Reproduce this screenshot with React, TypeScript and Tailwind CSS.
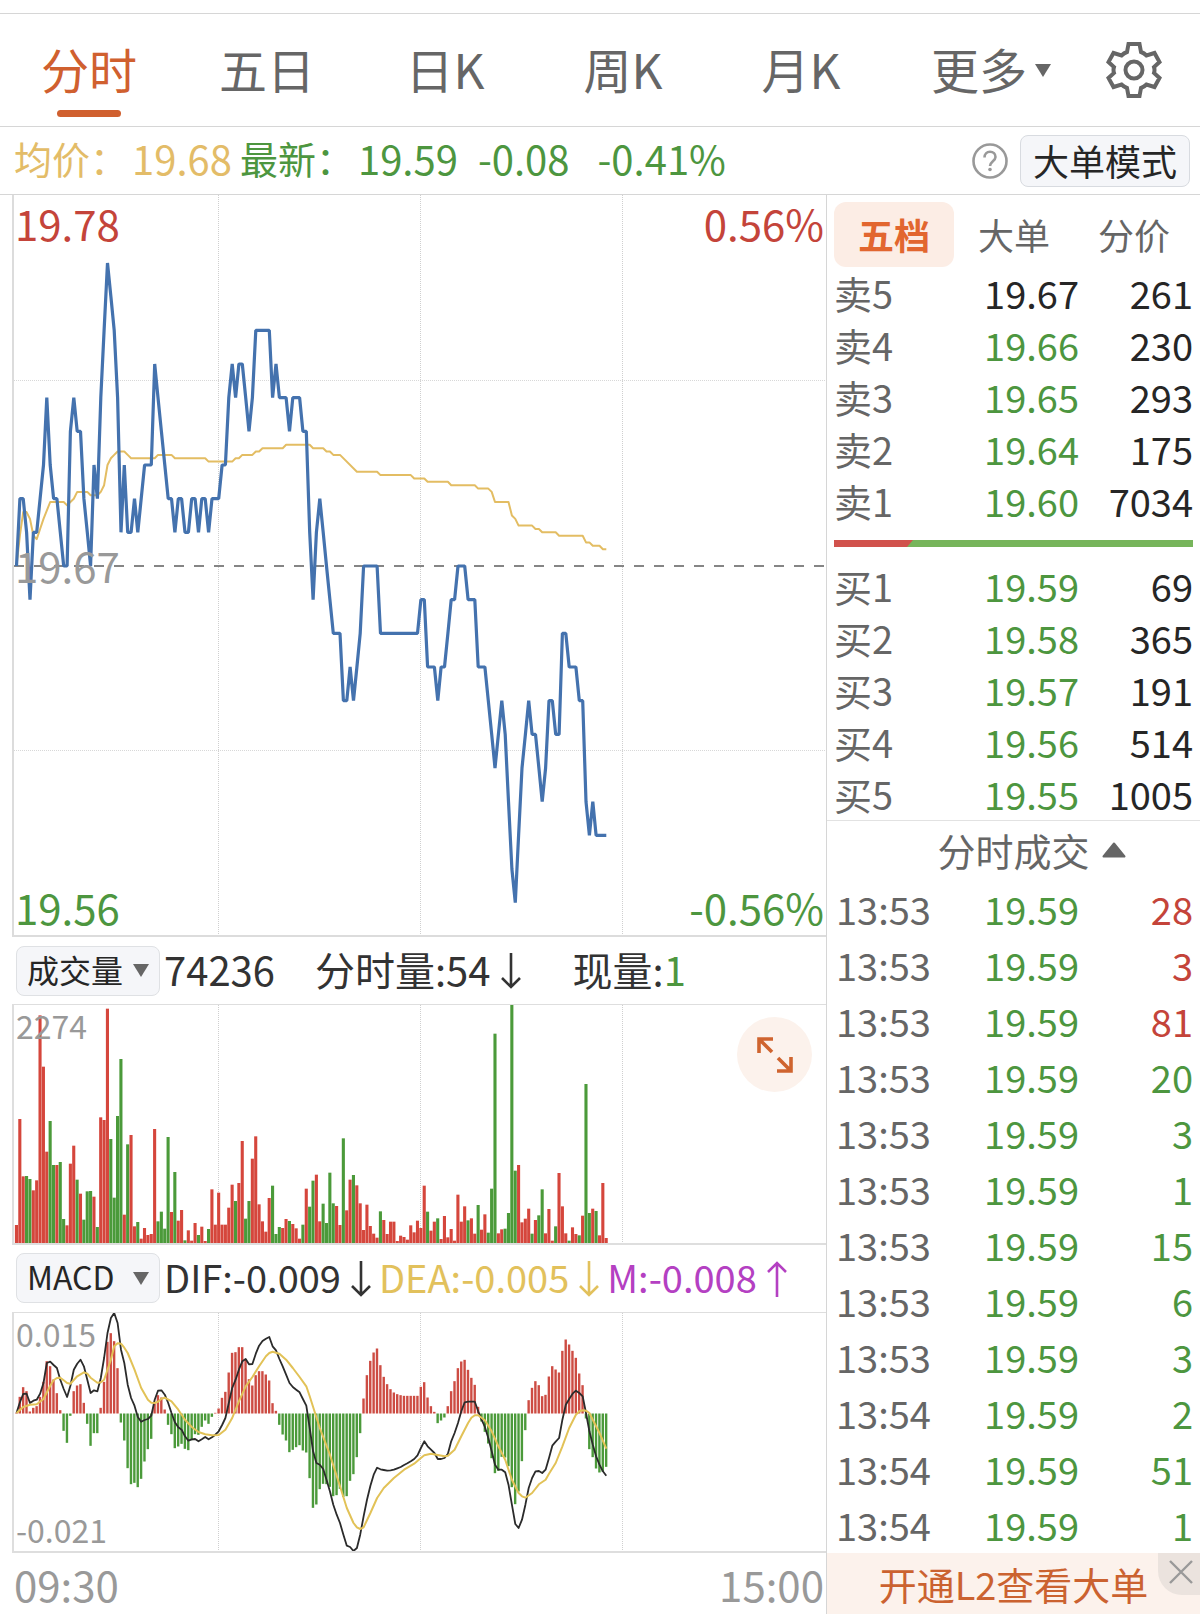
import { useState } from "react";
import clsx from "clsx";

interface Quote {
  label: string;
  price: string;
  volume: number;
  tone?: string;
}

interface Trade {
  time: string;
  volume: number;
  side: "buy" | "sell";
}

const RED = "#d5463c";
const GREEN = "#4b9a3a";
const STEP = 3.37;
const START = 2.5;

const periods = ["分时", "五日", "日K", "周K", "月K"];

const asks: Quote[] = [
  { label: "卖5", price: "19.67", volume: 261, tone: "text-[#262626]" },
  { label: "卖4", price: "19.66", volume: 230 },
  { label: "卖3", price: "19.65", volume: 293 },
  { label: "卖2", price: "19.64", volume: 175 },
  { label: "卖1", price: "19.60", volume: 7034 },
];

const bids: Quote[] = [
  { label: "买1", price: "19.59", volume: 69 },
  { label: "买2", price: "19.58", volume: 365 },
  { label: "买3", price: "19.57", volume: 191 },
  { label: "买4", price: "19.56", volume: 514 },
  { label: "买5", price: "19.55", volume: 1005 },
];

const trades: Trade[] = [
  { time: "13:53", volume: 28, side: "buy" },
  { time: "13:53", volume: 3, side: "buy" },
  { time: "13:53", volume: 81, side: "buy" },
  { time: "13:53", volume: 20, side: "sell" },
  { time: "13:53", volume: 3, side: "sell" },
  { time: "13:53", volume: 1, side: "sell" },
  { time: "13:53", volume: 15, side: "sell" },
  { time: "13:53", volume: 6, side: "sell" },
  { time: "13:53", volume: 3, side: "sell" },
  { time: "13:54", volume: 2, side: "sell" },
  { time: "13:54", volume: 51, side: "sell" },
  { time: "13:54", volume: 1, side: "sell" },
];

// Price per minute, in cents above or below the previous close
const price = [
  0, 2, 2, 1, -1, 1, 1, 2, 3, 5, 3, 2, 2, 1, 0, 0, 4, 5, 4, 4,
  2, 1, 0, 3, 2, 5, 7, 9, 8, 7, 5, 1, 3, 1, 1, 2, 1, 2, 3, 3,
  3, 6, 5, 4, 3, 2, 2, 1, 2, 2, 1, 1, 2, 2, 1, 2, 2, 1, 2, 2,
  2, 3, 3, 5, 6, 5, 6, 6, 5, 4, 5, 7, 7, 7, 7, 7, 5, 6, 5, 5,
  5, 4, 5, 5, 5, 4, 4, 1, -1, 1, 2, 1, 0, -1, -2, -2, -2, -4, -4, -3,
  -4, -3, -2, 0, 0, 0, 0, 0, -2, -2, -2, -2, -2, -2, -2, -2, -2, -2, -2, -2,
  -1, -1, -3, -3, -3, -4, -3, -3, -2, -1, -1, 0, 0, 0, -1, -1, -1, -3, -3, -3,
  -4, -5, -6, -5, -4, -5, -7, -9, -10, -8, -6, -5, -4, -5, -5, -6, -7, -6, -4, -4,
  -5, -5, -2, -2, -3, -3, -3, -4, -4, -7, -8, -7, -8, -8, -8, -8,
];

// Average price as [minute, tenths of a cent]
const average: number[][] = [
  [0, 0], [1, 9], [2, 16], [3, 16], [4, 14], [5, 9], [6, 8], [7, 11], [8, 14], [10, 19],
  [14, 19], [15, 18], [16, 19], [17, 20], [18, 22], [21, 22], [22, 21], [24, 21], [25, 22], [26, 24],
  [27, 30], [28, 32], [29, 33], [30, 34], [32, 34], [33, 33], [34, 32], [41, 32], [42, 33], [46, 33],
  [47, 32], [56, 32], [57, 31], [64, 31], [65, 32], [66, 32], [67, 33], [70, 33], [71, 34], [72, 34],
  [73, 35], [79, 35], [80, 36], [87, 36], [88, 35], [91, 35], [92, 34], [93, 34], [94, 33], [96, 33],
  [101, 28], [107, 28], [108, 27], [117, 27], [118, 26], [121, 26], [122, 25], [128, 25], [129, 24], [136, 24],
  [137, 23], [140, 23], [141, 22], [142, 19], [146, 19], [147, 15], [148, 14], [149, 12], [153, 12], [154, 11],
  [155, 11], [156, 10], [160, 10], [161, 9], [168, 9], [169, 7], [170, 7], [171, 6], [173, 6], [174, 5], [175, 5],
];

// Volume bars, negative for a falling minute
const volumes = [
  54, 372, 200, -201, -192, 158, 188, 683, 529, 274, -366, -234, 234, -243, -72, 53, 238, 292, -190, 148,
  -70, -155, -156, 139, -48, 377, 369, 703, -312, -136, -381, -552, 85, -296, 324, 50, -63, 13, 45, 24,
  27, 342, -65, -94, -43, -318, 93, -213, 67, 99, -8, 38, 7, 60, -24, 49, 6, -42, 161, 55,
  151, 55, 55, 106, 175, -126, 180, 306, -73, -126, 253, 320, 116, 65, 34, 135, -172, -27, -48, 45,
  72, -66, 57, 44, 13, -55, 163, -109, -187, 205, 65, -118, -60, -211, -119, 111, 54, -314, 98, 190,
  -204, 173, 119, 39, 115, 51, 28, 16, -95, 69, 27, 64, 64, 6, 22, 18, 10, 53, 32, 67,
  45, 172, -94, 37, 64, -74, 12, 81, 17, 42, 7, 145, 64, 110, -68, 74, 28, -114, 40, 86,
  -31, -163, -628, 29, 41, -43, -90, -715, -217, 234, 62, 73, 103, -28, 69, -83, -161, 29, 102, 7,
  -50, 210, 110, 29, -7, 47, 27, -23, 82, -477, -90, 103, -96, 23, 180, 15,
];

const histogram = [
  2, 50, 79, 67, 6, 17, 22, 50, 95, 157, 142, 102, 61, 10, -52, -88, -7, 67, 84, 88,
  32, -31, -97, -59, -59, 17, 95, 215, 241, 217, 136, -27, -81, -164, -212, -208, -221, -196, -144, -107,
  -76, 30, 55, 48, 12, -34, -62, -104, -99, -91, -106, -110, -80, -62, -64, -40, -21, -31, -10, 2,
  15, 47, 65, 123, 182, 184, 199, 199, 163, 103, 84, 115, 127, 127, 117, 99, 31, 8, -34, -63,
  -81, -116, -109, -101, -95, -111, -117, -194, -283, -273, -227, -211, -212, -220, -248, -245, -226, -250, -248, -202,
  -182, -131, -59, 45, 115, 158, 183, 195, 145, 110, 88, 73, 63, 58, 55, 53, 53, 53, 53, 53,
  80, 94, 48, 22, 5, -29, -21, -12, 22, 67, 97, 136, 156, 161, 131, 107, 86, 20, -24, -55,
  -90, -134, -179, -172, -130, -132, -158, -221, -272, -234, -143, -50, 40, 77, 97, 85, 52, 56, 111, 142,
  132, 123, 188, 222, 207, 188, 167, 120, 85, -15, -107, -131, -165, -177, -175, -160,
];

const dif = [
  0, 32, 57, 58, 30, 37, 40, 58, 90, 150, 154, 144, 135, 100, 72, 48, 82, 130, 148, 160,
  140, 100, 60, 68, 65, 105, 165, 240, 285, 300, 270, 190, 150, 85, 45, 22, -12, -26, -21, -18,
  -8, 40, 67, 68, 55, 30, 0, -28, -43, -50, -70, -83, -79, -78, -85, -79, -72, -79, -73, -65,
  -55, -36, -15, 30, 75, 100, 130, 155, 162, 146, 147, 178, 202, 216, 223, 228, 200, 188, 162, 140,
  115, 90, 78, 70, 62, 42, 22, -45, -115, -150, -155, -168, -200, -235, -275, -305, -330, -365, -398, -402,
  -414, -405, -365, -310, -260, -218, -185, -164, -169, -171, -173, -172, -170, -166, -162, -156, -151, -145, -138, -127,
  -105, -85, -100, -110, -120, -138, -138, -135, -122, -85, -60, -30, 5, 32, 34, 34, 34, 5, -20, -42,
  -75, -115, -155, -170, -170, -178, -215, -275, -333, -345, -320, -275, -225, -195, -175, -174, -180, -170, -135, -98,
  -86, -75, -20, 25, 42, 58, 67, 60, 50, 0, -55, -95, -130, -155, -175, -188,
];

const dea: number[][] = [
  [0, 0], [2, 18], [4, 25], [6, 26], [8, 42], [10, 82], [11, 98], [12, 105], [13, 106], [14, 98],
  [15, 90], [16, 88], [18, 110], [20, 122], [21, 118], [22, 106], [24, 91], [25, 92], [26, 100], [28, 160],
  [29, 200], [30, 209], [31, 208], [32, 196], [33, 180], [35, 130], [37, 75], [39, 40], [40, 31], [41, 30],
  [42, 34], [43, 43], [44, 46], [46, 35], [48, 10], [50, -20], [52, -42], [54, -57], [56, -64], [58, -67],
  [60, -66], [62, -50], [64, -15], [66, 35], [68, 80], [70, 108], [72, 140], [74, 170], [75, 180], [76, 184],
  [78, 178], [80, 160], [82, 135], [84, 108], [86, 80], [87, 50], [90, -45], [93, -125], [96, -220], [98, -285],
  [100, -330], [101, -343], [102, -348], [103, -343], [105, -300], [107, -255], [109, -225], [112, -195], [115, -170], [118, -152],
  [120, -135], [121, -127], [123, -122], [125, -126], [127, -130], [128, -128], [130, -110], [132, -70], [134, -30], [135, -14],
  [136, -7], [137, -7], [139, -22], [141, -55], [143, -100], [145, -140], [147, -200], [149, -240], [150, -250], [151, -254],
  [153, -240], [155, -214], [157, -200], [158, -182], [160, -150], [162, -100], [164, -45], [166, -5], [167, 5], [168, 8],
  [169, 7], [170, 0], [171, -20], [173, -60], [175, -107],
];

const xAt = (minute: number) => START + minute * STEP;

function toPoints(pairs: number[][], zero: number, scale: number) {
  return pairs.map(([i, v]) => `${xAt(i).toFixed(1)},${(zero - v * scale).toFixed(1)}`).join(" ");
}

function GridLines({ height }: { height: number }) {
  return (
    <g stroke="#cfcfcf" strokeWidth="1" strokeDasharray="1 1">
      {[204.5, 406.5, 608.5].map((x) => (
        <line key={x} x1={x} x2={x} y1="0" y2={height} />
      ))}
    </g>
  );
}

function PriceChart() {
  return (
    <div className="relative border-l-2 border-b-2 border-[#dcdcdc] text-[42px] leading-[48px]">
      <svg viewBox="0 0 812 740" preserveAspectRatio="none" className="block h-[740px] w-full" aria-hidden="true">
        <GridLines height={740} />
        <g stroke="#d8d8d8" strokeDasharray="1 1">
          <line x1="0" x2="812" y1="185.5" y2="185.5" />
          <line x1="0" x2="812" y1="555.5" y2="555.5" />
        </g>
        <line x1="0" x2="812" y1="371" y2="371" stroke="#858585" strokeWidth="2" strokeDasharray="10 10" />
        <polyline points={toPoints(average, 371, 3.367)} fill="none" stroke="#e3bd63" strokeWidth="2" strokeLinejoin="round" />
        <polyline
          points={toPoints(price.map((v, i) => [i, v]), 371, 33.67)}
          fill="none"
          stroke="#4472ae"
          strokeWidth="3.2"
          strokeLinejoin="bevel"
        />
      </svg>
      <span className="absolute left-px top-1 text-[#c4443a]">19.78</span>
      <span className="absolute right-0.5 top-1 text-[#c4443a]">0.56%</span>
      <span className="absolute left-px top-[346px] text-[#999999]">19.67</span>
      <span className="absolute bottom-1 left-px text-[#4d963f]">19.56</span>
      <span className="absolute bottom-1 right-0.5 text-[#4d963f]">-0.56%</span>
    </div>
  );
}

function VolumeChart() {
  return (
    <div className="relative border-l-2 border-b-2 border-t border-[#dedede]">
      <svg viewBox="0 0 812 238" preserveAspectRatio="none" className="block h-[238px] w-full" aria-hidden="true">
        <GridLines height={238} />
        {volumes.map((v, i) => (
          <rect
            key={i}
            x={xAt(i) - 1.6}
            y={238 - Math.abs(v) / 3}
            width="3.1"
            height={Math.abs(v) / 3}
            fill={v > 0 ? RED : GREEN}
          />
        ))}
      </svg>
      <span className="absolute left-0.5 top-0.5 text-[32px] leading-9 text-[#999999]">2274</span>
      <button
        type="button"
        aria-label="全屏"
        className="absolute right-3.5 top-3 flex size-[75px] items-center justify-center rounded-full bg-[#fcf2ec]"
      >
        <svg viewBox="0 0 36 36" className="size-9" fill="none" stroke="#cf642f" strokeWidth="3.6" aria-hidden="true">
          <path d="M16 2H2v14M2 2l13 13M20 34h14V20M34 34 21 21" />
        </svg>
      </button>
    </div>
  );
}

function MacdChart() {
  return (
    <div className="relative border-l-2 border-b-2 border-t border-[#dedede] text-[32px] leading-9 text-[#999999]">
      <svg viewBox="0 0 812 238" preserveAspectRatio="none" className="block h-[238px] w-full" aria-hidden="true">
        <GridLines height={238} />
        {histogram.map((v, i) => (
          <rect
            key={i}
            x={xAt(i) - 1.3}
            y={v > 0 ? 100.5 - v / 3 : 100.5}
            width="2.4"
            height={Math.abs(v) / 3}
            fill={v > 0 ? "#cd4c43" : GREEN}
          />
        ))}
        <polyline
          points={toPoints(dif.map((v, i) => [i, v]), 100, 0.3333)}
          fill="none"
          stroke="#2b2b2b"
          strokeWidth="1.8"
          strokeLinejoin="round"
        />
        <polyline points={toPoints(dea, 100, 0.3333)} fill="none" stroke="#e2c257" strokeWidth="2" strokeLinejoin="round" />
      </svg>
      <span className="absolute left-0.5 top-0.5">0.015</span>
      <span className="absolute bottom-1 left-0.5">-0.021</span>
    </div>
  );
}

function IndicatorSelect({ name, options }: { name: string; options: string[] }) {
  return (
    <div className="relative mb-1 mr-1 h-[50px] w-[144px] shrink-0">
      <select
        aria-label={name}
        className="size-full appearance-none rounded-lg border border-[#dfe1e4] bg-[#f5f6f9] pb-1 pl-[10px] text-[32px] leading-[44px] text-[#262626]"
      >
        {options.map((option) => (
          <option key={option}>{option}</option>
        ))}
      </select>
      <svg viewBox="0 0 16 13" className="pointer-events-none absolute right-[11px] top-[22px] h-[13px] w-4" aria-hidden="true">
        <path d="M0 0h16l-8 13z" fill="#666666" />
      </svg>
    </div>
  );
}

function Arrow({ up = false }: { up?: boolean }) {
  return (
    <svg
      viewBox="0 0 20 36"
      className="ml-2.5 mr-2 mt-1 h-9 w-5 shrink-0"
      fill="none"
      stroke="currentColor"
      strokeWidth="2.6"
      aria-hidden="true"
    >
      <path d={up ? "M10 36V2M1 11l9-9 9 9" : "M10 0v34M1 25l9 9 9-9"} />
    </svg>
  );
}

function QuoteTable({ name, quotes }: { name: string; quotes: Quote[] }) {
  return (
    <table aria-label={name} className="w-full table-fixed text-[38px] leading-[52px]">
      <tbody>
        {quotes.map((q) => (
          <tr key={q.label} className="h-[52px]">
            <th scope="row" className="w-[106px] p-0 text-left font-normal text-[#666666]">{q.label}</th>
            <td className={clsx("p-0 text-right", q.tone ?? "text-[#4d963f]")}>{q.price}</td>
            <td className="w-[114px] p-0 text-right text-[#262626]">{q.volume}</td>
          </tr>
        ))}
      </tbody>
    </table>
  );
}

function GearIcon() {
  return (
    <svg viewBox="0 0 56 56" className="size-14" fill="none" stroke="#666666" strokeWidth="4" aria-hidden="true">
      <path d="M22.5 2h11l1.5 8q3 1 5.5 3.5l8-2.5 5 9-5.5 5q1 3 0 6l5.5 5-5 9-8-2.5Q38 45 35 46l-1.5 8h-11L21 46q-3-1-5.5-3.5l-8 2.5-5-9L8 31q-1-3 0-6l-5.5-5 5-9 8 2.5Q18 11 21 10z" />
      <circle cx="28" cy="28" r="8.5" />
    </svg>
  );
}

export default function App() {
  const [period, setPeriod] = useState("分时");
  const [book, setBook] = useState("五档");

  return (
    <main className="min-h-screen w-full overflow-hidden bg-white pt-[13px] font-['Noto_Sans_CJK_SC',sans-serif] text-[#333333]">
      <nav className="grid h-[114px] grid-cols-[repeat(6,178fr)_132fr] border-y border-[#d6d6d6] text-[48px] leading-[56px] text-[#666666]">
        {periods.map((p) => (
          <button
            key={p}
            type="button"
            onClick={() => setPeriod(p)}
            className={clsx("relative flex items-center justify-center pb-1", p === period && "text-[#d0602f]")}
          >
            {p}
            {p === period && <span className="absolute bottom-[9px] h-[7px] w-16 rounded-full bg-[#d0602f]" />}
          </button>
        ))}
        <button type="button" aria-haspopup="menu" className="flex items-center justify-center gap-2 pb-1 pl-6">
          更多
          <svg viewBox="0 0 16 13" className="mt-1 h-[13px] w-4" aria-hidden="true">
            <path d="M0 0h16l-8 13z" fill="#666666" />
          </svg>
        </button>
        <button type="button" aria-label="设置" className="flex items-center justify-center">
          <GearIcon />
        </button>
      </nav>

      <section className="flex h-[68px] items-center border-b border-[#d6d6d6] pl-3.5 pr-2.5 text-[40px] leading-[48px] text-[#4d963f]">
        <div className="flex items-center pb-1.5">
          <span className="mr-1 text-[38px] text-[#e3bc68]">均价：</span>
          <span className="mr-2 text-[#e3bc68]">19.68</span>
          <span className="mr-1 text-[38px]">最新：</span>
          <span className="mr-5">19.59</span>
          <span className="mr-7">-0.08</span>
          <span>-0.41%</span>
        </div>
        <button type="button" aria-label="帮助" className="ml-auto mr-3">
          <svg viewBox="0 0 36 36" className="size-9" fill="none" stroke="#999999" strokeWidth="2.6" aria-hidden="true">
            <circle cx="18" cy="18" r="16.5" />
            <path d="M12.5 14.5c0-3.5 2.3-5.8 5.5-5.8s5.5 2.2 5.5 5.3c0 4-5.5 4.5-5.5 9" />
            <circle cx="18" cy="26.5" r="1.8" fill="#999999" stroke="none" />
          </svg>
        </button>
        <button
          type="button"
          className="h-[52px] rounded-lg border border-[#d8dbe0] bg-[#f5f6f9] px-3 pb-1 text-[36px] leading-[48px] text-[#262626]"
        >
          大单模式
        </button>
      </section>

      <div className="grid grid-cols-[827fr_373fr]">
        <div className="min-w-0 border-r border-[#d6d6d6] pl-3">
          <PriceChart />
          <div className="flex h-[67px] items-center whitespace-nowrap pb-1 pl-1 text-[40px] leading-[48px]">
            <IndicatorSelect name="主图指标" options={["成交量", "成交额"]} />
            <span className="mr-10">74236</span>
            <span>分时量:54</span>
            <Arrow />
            <span className="ml-11">
              现量:<span className="text-[#4d963f]">1</span>
            </span>
          </div>
          <VolumeChart />
          <div className="flex h-[67px] items-center whitespace-nowrap pb-1 pl-1 text-[38px] leading-[48px]">
            <IndicatorSelect name="副图指标" options={["MACD", "KDJ"]} />
            <span className="flex items-center">
              DIF:-0.009
              <Arrow />
            </span>
            <span className="flex items-center text-[#e2c15c]">
              DEA:-0.005
              <Arrow />
            </span>
            <span className="flex items-center text-[#b440c2]">
              M:-0.008
              <Arrow up />
            </span>
          </div>
          <MacdChart />
          <div className="flex h-[61px] items-center justify-between px-0.5 text-[42px] leading-[48px] text-[#999999]">
            <span>09:30</span>
            <span>15:00</span>
          </div>
        </div>

        <aside className="flex min-w-0 flex-col">
          <div className="flex h-[72px] items-end pl-[7px] text-[36px] leading-[48px] text-[#666666]">
            {["五档", "大单", "分价"].map((b) => (
              <button
                key={b}
                type="button"
                onClick={() => setBook(b)}
                className={clsx(
                  "h-[65px] w-[120px] rounded-xl pb-0.5",
                  b === book && "bg-[#fcede5] font-bold text-[#e2662f]"
                )}
              >
                {b}
              </button>
            ))}
          </div>
          <div className="px-[7px]">
            <QuoteTable name="卖盘" quotes={asks} />
            <svg viewBox="0 0 359 7" preserveAspectRatio="none" className="my-[13px] block h-[7px] w-full" aria-hidden="true">
              <rect width="359" height="7" fill="#77b55b" />
              <path d="M0 0h79l-6 7H0z" fill="#d1524c" />
            </svg>
            <QuoteTable name="买盘" quotes={bids} />
          </div>
          <button
            type="button"
            className="flex h-[61px] items-center justify-center gap-3 border-t border-[#e2e2e2] pb-0.5 pl-9 text-[38px] leading-[48px] text-[#666666]"
          >
            分时成交
            <svg viewBox="0 0 24 16" className="h-4 w-6" aria-hidden="true">
              <path d="M12 1.5 22.5 14.5h-21z" fill="#666666" stroke="#666666" strokeWidth="2" strokeLinejoin="round" />
            </svg>
          </button>
          <div className="px-[7px]">
            <table aria-label="分时成交" className="w-full table-fixed text-[38px] leading-[56px]">
              <tbody>
                {trades.map((t, i) => (
                  <tr key={i} className="h-14">
                    <td className="w-[106px] p-0 pl-0.5 text-[#666666]">{t.time}</td>
                    <td className="p-0 text-right text-[#4d963f]">19.59</td>
                    <td className={clsx("w-[114px] p-0 text-right", t.side === "buy" ? "text-[#c4443a]" : "text-[#4d963f]")}>
                      {t.volume}
                    </td>
                  </tr>
                ))}
              </tbody>
            </table>
          </div>
          <div className="relative flex flex-1 items-center justify-center bg-[#fcf2ec]">
            <a href="#l2" className="text-[38px] leading-[56px] text-[#cb6230]">开通L2查看大单</a>
            <button
              type="button"
              aria-label="关闭"
              className="absolute right-0 top-0 flex h-[42px] w-[42px] items-center justify-center rounded-bl-3xl bg-[#ebe3de]"
            >
              <svg viewBox="0 0 24 24" className="mb-1 ml-1 size-6" stroke="#999999" strokeWidth="2.4" aria-hidden="true">
                <path d="M1 1l22 22M23 1 1 23" />
              </svg>
            </button>
          </div>
        </aside>
      </div>
    </main>
  );
}
